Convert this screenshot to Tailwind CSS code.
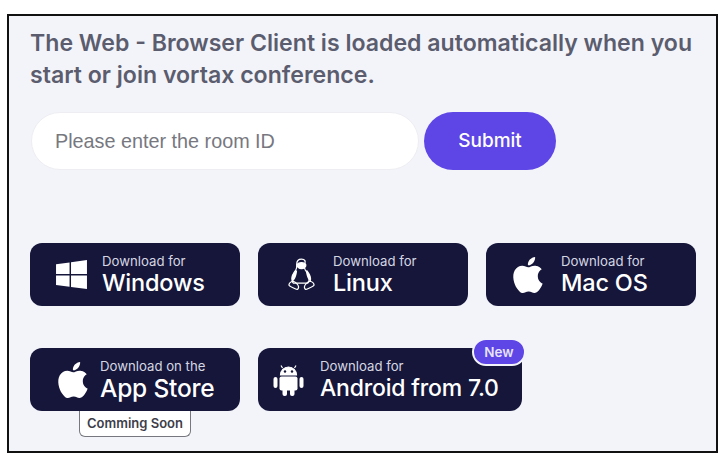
<!DOCTYPE html>
<html lang="en">
  <head>
    <meta charset="UTF-8" />
    <meta name="viewport" content="width=device-width, initial-scale=1.0" />
    <title>Vortax - Download</title>
    <script src="https://cdn.jsdelivr.net/npm/@tailwindcss/browser@4"></script>
  </head>
  <body class="w-[723px] h-[467px] bg-white overflow-hidden font-['Inter',sans-serif]">
    <div class="ml-[7px] mt-[14px] w-[711px] h-[439px] border-2 border-[#111111] bg-[#f3f4fa] pl-[21px] pt-[11px]">
      <h1 class="w-[668px] text-[23.1px] leading-[32px] font-semibold text-[#5b5d6e]">
        The Web - Browser Client is loaded automatically when you start or join vortax conference.
      </h1>

      <form class="flex gap-[5px] mt-[21px] ml-[1px]">
        <input
          type="text"
          placeholder="Please enter the room ID"
          class="w-[388px] h-[58px] pl-[23px] rounded-full bg-white border border-[#eeeef2] text-[19.8px] font-['Liberation_Sans',sans-serif] placeholder:text-[#77787f] outline-none"
        />
        <button type="submit" class="w-[132px] h-[58px] rounded-full bg-[#5e45e6] text-white text-[19px] font-medium">Submit</button>
      </form>

      <div class="flex gap-[18px] mt-[73px]">
        <a class="flex items-center w-[210px] h-[63px] pl-[26px] gap-[15px] rounded-xl bg-[#15163a] text-white">
          <svg viewBox="0 0 32 30" class="w-[31px] h-[29px]" fill="#fff"><path d="M0 4.500l14-2v12H0zM15.500 2.300L32 0v14.500H15.500zM0 16h14v11.800L0 25.800zM15.500 16H32V30l-16.500-2z" /></svg>
          <div>
            <div class="text-[13.2px] leading-[16px] text-[#d5d6e2]">Download for</div>
            <div class="text-[23.500px] leading-[28px] font-medium tracking-[-0.2px]">Windows</div>
          </div>
        </a>

        <a class="flex items-center w-[210px] h-[63px] pl-[30px] gap-[18px] rounded-xl bg-[#15163a] text-white">
          <svg viewBox="0 0 28 34" class="w-[27px] h-[33px]" fill="none" stroke="#fff" stroke-width="1.300" stroke-linejoin="round">
            <path d="M14 1c-3.500 0-5 2.500-5 5.500 0 2.500.5 4-1 6-2 2.500-4 5.500-4 9 0 2 .5 3.500 1.500 4.500h15c1-1 1.500-2.500 1.500-4.500 0-3.500-2-6.500-4-9-1.500-2-1-3.500-1-6C19 3.500 17.500 1 14 1z" />
            <path d="M9.500 7c1-3 8-3 9 0 .3 2-2 4-4.500 4s-4.800-2-4.500-4z" fill="#fff" />
            <path d="M8 12.500c-2 2.500-4 5.500-4 9 0 1 .1 2 .5 2.800C8 22 9 17 9.500 13zM20 12.500c2 2.500 4 5.500 4 9 0 1-.1 2-.5 2.800C20 22 19 17 18.500 13z" fill="#fff" stroke="none" />
            <path d="M5 24c-2 .5-4 2-4 4 0 1.500 4 2.500 7 4 2 1 3-.5 3-2 0-2-3-5.500-6-6zM23 24c2 .5 4 2 4 4 0 1.500-4 2.500-7 4-2 1-3-.5-3-2 0-2 3-5.500 6-6z" />
          </svg>
          <div>
            <div class="text-[13.2px] leading-[16px] text-[#d5d6e2]">Download for</div>
            <div class="text-[23.500px] leading-[28px] font-medium tracking-[-0.2px]">Linux</div>
          </div>
        </a>

        <a class="flex items-center w-[210px] h-[63px] pl-[25px] gap-[16px] rounded-xl bg-[#15163a] text-white">
          <svg viewBox="3 1.500 18 21" class="w-[34px] h-[38px]" fill="#fff"><path d="M18.710 19.500c-.83 1.240-1.710 2.450-3.050 2.470-1.340.03-1.770-.79-3.290-.79-1.530 0-2 .77-3.270.82-1.310.05-2.300-1.320-3.140-2.530C4.250 17 2.940 12.450 4.700 9.390c.87-1.520 2.430-2.480 4.120-2.510 1.280-.02 2.500.87 3.290.87.78 0 2.260-1.070 3.810-.91.65.03 2.470.26 3.640 1.980-.09.06-2.170 1.280-2.150 3.810.03 3.020 2.650 4.030 2.680 4.040-.03.07-.42 1.440-1.380 2.830M13 3.500c.73-.83 1.940-1.460 2.940-1.500.13 1.170-.34 2.350-1.040 3.190-.69.85-1.830 1.510-2.950 1.420-.15-1.150.41-2.350 1.050-3.110z" /></svg>
          <div>
            <div class="text-[13.2px] leading-[16px] text-[#d5d6e2]">Download for</div>
            <div class="text-[23.500px] leading-[28px] font-medium tracking-[-0.2px]">Mac OS</div>
          </div>
        </a>
      </div>

      <div class="flex gap-[18px] mt-[42px]">
        <div class="relative">
          <a class="flex items-center w-[210px] h-[63px] pl-[26px] gap-[10px] rounded-xl bg-[#15163a] text-white">
            <svg viewBox="3 1.500 18 21" class="w-[34px] h-[38px]" fill="#fff"><path d="M18.710 19.500c-.83 1.240-1.710 2.450-3.050 2.470-1.340.03-1.770-.79-3.290-.79-1.530 0-2 .77-3.270.82-1.310.05-2.300-1.320-3.140-2.530C4.250 17 2.940 12.450 4.700 9.390c.87-1.520 2.430-2.480 4.120-2.510 1.280-.02 2.500.87 3.290.87.78 0 2.260-1.070 3.810-.91.65.03 2.470.26 3.640 1.980-.09.06-2.170 1.280-2.150 3.810.03 3.020 2.650 4.030 2.680 4.040-.03.07-.42 1.440-1.380 2.830M13 3.500c.73-.83 1.940-1.460 2.940-1.500.13 1.170-.34 2.350-1.040 3.190-.69.85-1.830 1.510-2.950 1.420-.15-1.150.41-2.350 1.050-3.110z" /></svg>
            <div>
              <div class="text-[13.2px] leading-[16px] text-[#d5d6e2]">Download on the</div>
              <div class="text-[24.5px] leading-[28px] font-medium tracking-[-0.2px]">App Store</div>
            </div>
          </a>
          <span class="absolute left-[49px] top-[63px] w-[112px] h-[26px] pt-[1px] flex items-center justify-center rounded-b-md border border-t-0 border-[#77787f] bg-white text-[13px] font-semibold text-[#3d3e4a]">Comming Soon</span>
        </div>

        <div class="relative">
          <a class="flex items-center w-[264px] h-[63px] pl-[15px] gap-[16px] rounded-xl bg-[#15163a] text-white">
            <svg viewBox="0 0 30 32" class="w-[31px] h-[32px]" fill="#fff">
              <path d="M7 11a8 8 0 0 1 16 0zM9 4L7.500 1.500M21 4l1.500-2.500" stroke="#fff" stroke-width="1.200" />
              <rect x="6" y="12.500" width="18" height="14" rx="2" />
              <rect x="9" y="24" width="4.500" height="8" rx="2" />
              <rect x="16.500" y="24" width="4.500" height="8" rx="2" />
              <rect x="0" y="13" width="4" height="11" rx="2" />
              <rect x="26" y="13" width="4" height="11" rx="2" />
              <circle cx="11.500" cy="7.500" r="1.200" fill="#15163a" />
              <circle cx="18.500" cy="7.500" r="1.200" fill="#15163a" />
            </svg>
            <div>
              <div class="text-[13.2px] leading-[16px] text-[#d5d6e2]">Download for</div>
              <div class="text-[23px] leading-[28px] font-medium tracking-[-0.2px]">Android from 7.0</div>
            </div>
          </a>
          <span class="absolute left-[214px] top-[-10px] w-[54px] h-[28px] flex items-center justify-center rounded-full border-2 border-[#f3f4fa] bg-[#5e45e6] text-[13.5px] font-semibold text-[#e6e4fb]">New</span>
        </div>
      </div>
    </div>
  </body>
</html>
